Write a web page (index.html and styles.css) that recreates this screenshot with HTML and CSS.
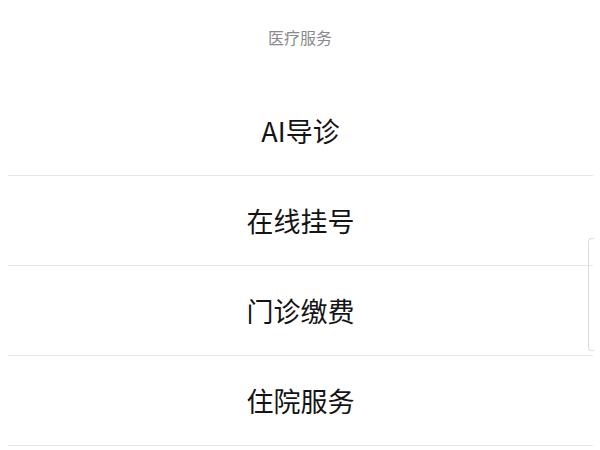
FILE: index.html
```html
<!DOCTYPE html>
<html lang="zh-CN">
<head>
<meta charset="utf-8">
<title>医疗服务</title>
<link rel="stylesheet" href="styles.css">
</head>
<body>
<div class="page">
  <header class="title">医疗服务</header>
  <ul class="menu">
    <li class="item">AI导诊</li>
    <li class="item">在线挂号</li>
    <li class="item">门诊缴费</li>
    <li class="item">住院服务</li>
  </ul>
  <div class="scroll-thumb"></div>
</div>
</body>
</html>
```
FILE: styles.css
```css
html, body {
  margin: 0;
  padding: 0;
  background: #ffffff;
}
body {
  font-family: "Noto Sans CJK SC", "Noto Sans", sans-serif;
}
.page {
  position: relative;
  width: 600px;
  height: 450px;
  overflow: hidden;
}
.title {
  height: 86px;
  box-sizing: border-box;
  padding-top: 26px;
  text-align: center;
  font-size: 16px;
  line-height: 22px;
  color: #8a8a8a;
}
.menu {
  list-style: none;
  margin: 0 7px 0 8px;
  padding: 0;
}
.item {
  height: 89px;
  border-bottom: 1.5px solid #e8e8e8;
  display: flex;
  align-items: center;
  justify-content: center;
  font-size: 27px;
  color: #141414;
}
.scroll-thumb {
  position: absolute;
  left: 588px;
  top: 238px;
  width: 5px;
  height: 111px;
  border: 1px solid #dcdcdc;
  border-right: none;
  border-radius: 4px 0 0 4px;
}
```
